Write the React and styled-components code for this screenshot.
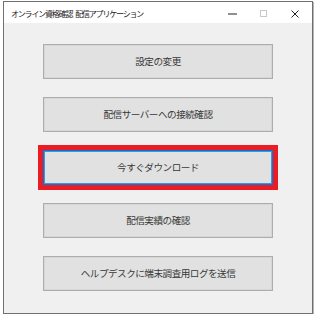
import React from "react";
import styled, { createGlobalStyle } from "styled-components";

const Global = createGlobalStyle`
  html, body { margin: 0; padding: 0; background: #ffffff; }
  body { font-family: "Noto Sans CJK JP", "Noto Sans", sans-serif; }
`;

const Window = styled.div`
  margin: 1px 0 0 3px;
  width: 310px;
  height: 313px;
  border: 1px solid #707070;
  box-shadow: 1px 1px 0 #b4b4b4;
  background: #f0f0f0;
  display: flex;
  flex-direction: column;
  box-sizing: border-box;
`;

const TitleBar = styled.div`
  height: 21px;
  background: #ffffff;
  display: flex;
  align-items: center;
  padding-left: 7px;
  flex-shrink: 0;
`;

const Title = styled.div`
  flex: 1;
  display: flex;
  gap: 3px;
  font-size: 8px;
  letter-spacing: -1.2px;
  color: #1a1a1a;
  white-space: nowrap;
  line-height: 1;
  padding-top: 2px;
`;

const Controls = styled.div`
  display: flex;
  align-items: center;
  height: 100%;
  padding-right: 2px;
`;

const CtrlBtn = styled.div`
  width: 31px;
  height: 100%;
  display: flex;
  align-items: center;
  justify-content: center;
  padding-top: 2px;
  box-sizing: border-box;
`;

const Client = styled.div`
  flex: 1;
  display: flex;
  flex-direction: column;
  align-items: flex-start;
  gap: 18px;
  padding: 21px 0 0 39px;
`;

const Button = styled.div`
  width: 230px;
  height: 35px;
  box-sizing: border-box;
  background: #e1e1e1;
  border: 1px solid ${(p) => (p.$focused ? "#0078d7" : "#adadad")};
  box-shadow: ${(p) =>
    p.$focused ? "inset 0 0 0 1px #3c95df" : "inset 0 0 0 1px #d6d6d6"};
  outline: ${(p) => (p.$focused ? "5px solid #ec1c24" : "none")};
  display: flex;
  align-items: center;
  justify-content: center;
  font-size: 9.6px;
  letter-spacing: -0.5px;
  color: #383838;
  line-height: 1;
`;

const labels = [
  "設定の変更",
  "配信サーバーへの接続確認",
  "今すぐダウンロード",
  "配信実績の確認",
  "ヘルプデスクに端末調査用ログを送信",
];

export default function App() {
  return (
    <>
      <Global />
      <Window>
        <TitleBar>
          <Title>
            <span>オンライン資格確認</span>
            <span>配信アプリケーション</span>
          </Title>
          <Controls>
            <CtrlBtn>
              <svg width="9" height="2" viewBox="0 0 9 2">
                <rect x="0" y="0.5" width="9" height="1" fill="#222" />
              </svg>
            </CtrlBtn>
            <CtrlBtn>
              <svg width="7" height="7" viewBox="0 0 7 7">
                <rect x="0.5" y="0.5" width="6" height="6" fill="none" stroke="#c8c8c8" strokeWidth="1" />
              </svg>
            </CtrlBtn>
            <CtrlBtn>
              <svg width="8" height="8" viewBox="0 0 8 8">
                <path d="M0.5 0.5 L7.5 7.5 M7.5 0.5 L0.5 7.5" stroke="#222" strokeWidth="1" />
              </svg>
            </CtrlBtn>
          </Controls>
        </TitleBar>
        <Client>
          {labels.map((l, i) => (
            <Button key={l} $focused={i === 2}>
              {l}
            </Button>
          ))}
        </Client>
      </Window>
    </>
  );
}
